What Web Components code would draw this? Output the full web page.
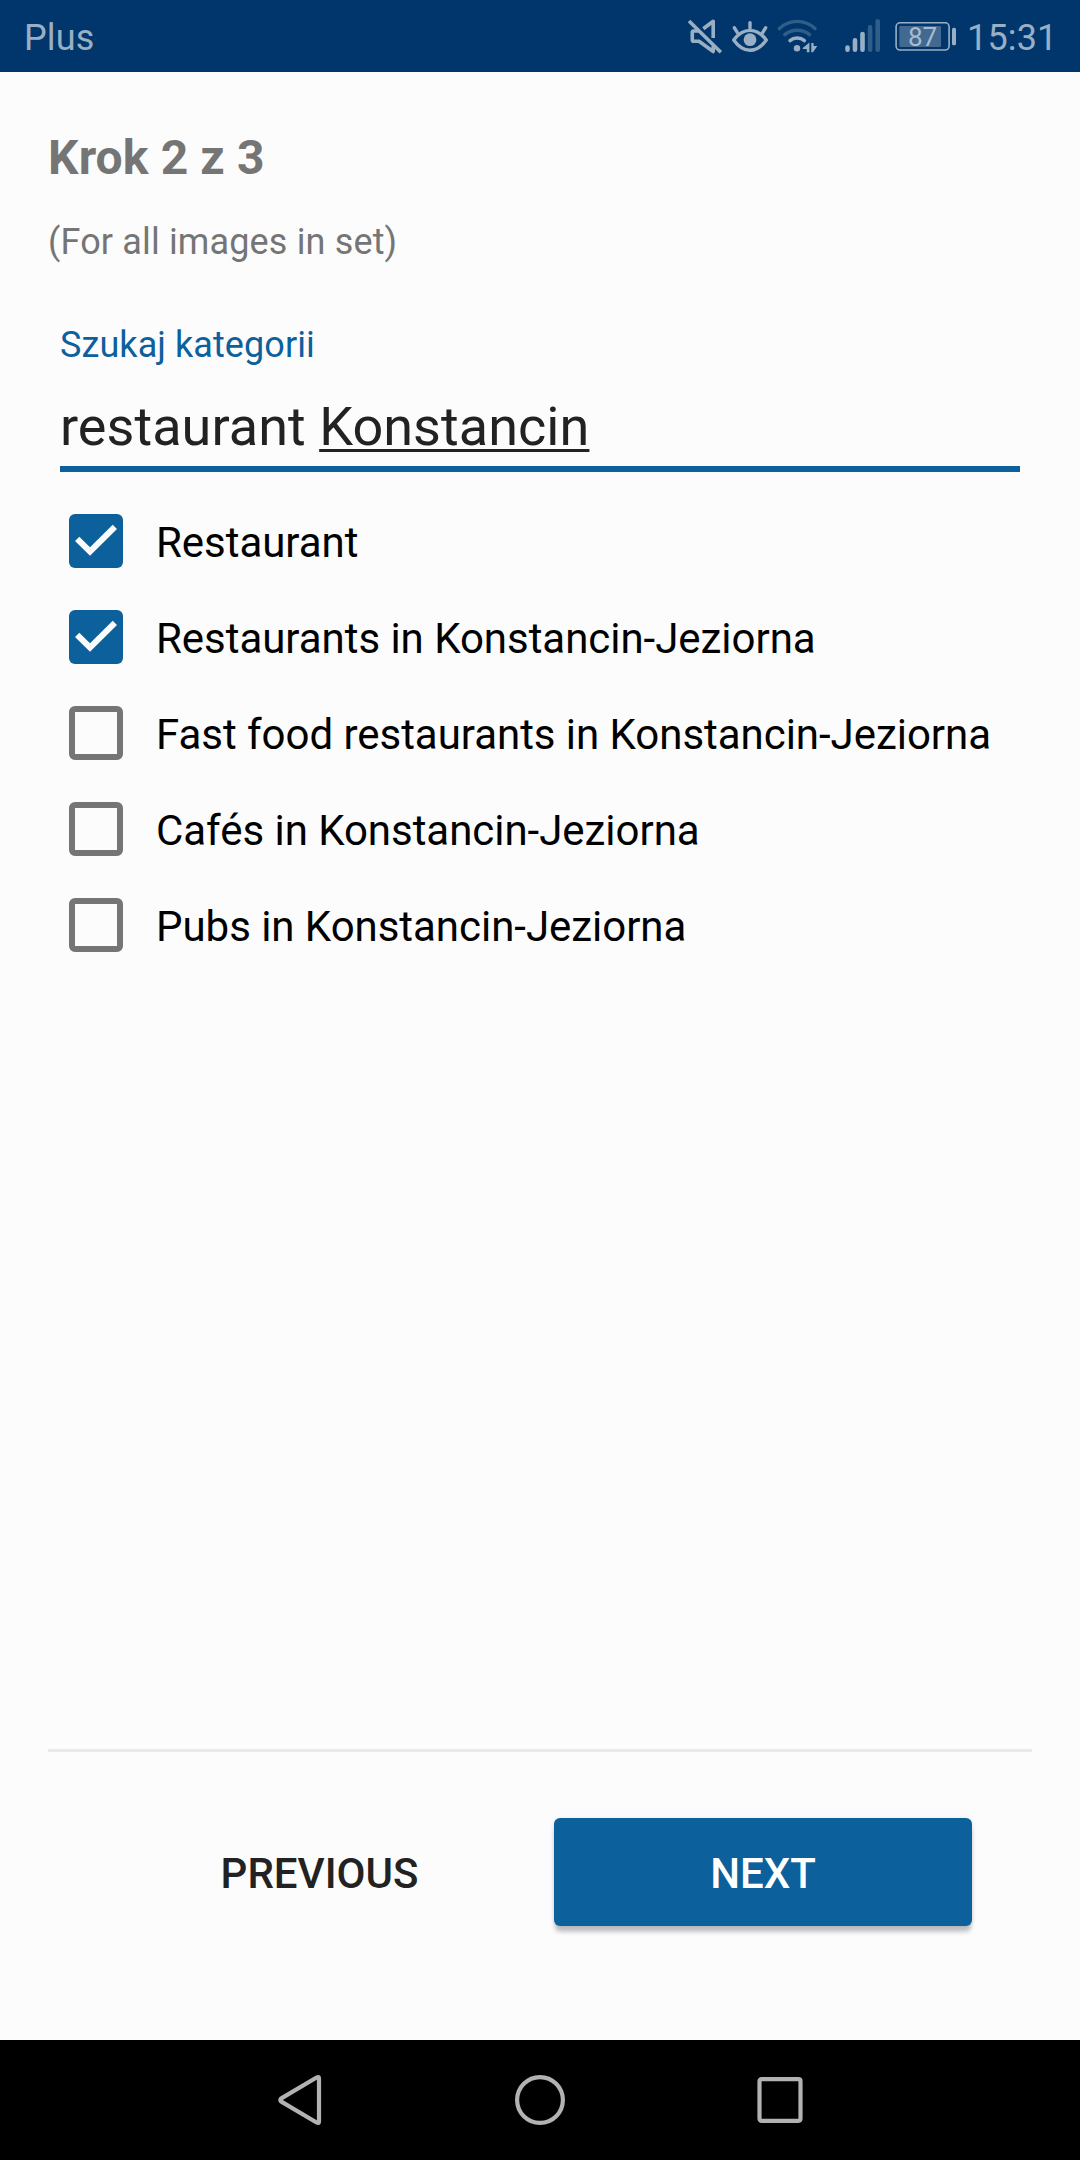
<!DOCTYPE html>
<html lang="pl">
<head>
<meta charset="utf-8">
<title>Szukaj kategorii</title>
<style>
html,body{margin:0;padding:0;background:#fcfcfc}
body{font-family:Roboto,sans-serif;width:1080px;height:2160px;overflow:hidden}
</style>
</head>
<body>
<upload-screen></upload-screen>
<script>
function define(name, html) {
  const t = document.createElement('template');
  t.innerHTML = html;
  customElements.define(name, class extends HTMLElement {
    constructor() {
      super();
      this.attachShadow({mode: 'open'}).append(t.content.cloneNode(true));
    }
  });
}

define('status-bar', `
<style>
:host{display:flex;box-sizing:border-box;height:72px;background:#00366b;color:#99afc4;font-size:36px;letter-spacing:.15px;line-height:76px;padding:0 0 0 24px;justify-content:space-between}
.right{display:flex;gap:10px;width:400px}
svg{display:block;letter-spacing:0;flex:none}
</style>
<slot></slot>
<div class="right">
<svg width="277" height="72" viewBox="680 0 277 72" fill="none" stroke="#99afc4" stroke-linecap="round" stroke-linejoin="round">
  <g stroke-width="3.6" stroke-linecap="butt">
    <path d="M703.3 28.8 713.2 21.3V38"/>
    <path d="M699 31H693.6Q692.3 31 692.3 32.3V40Q692.3 41.3 693.6 41.3H699L713.2 51.5V46"/>
    <path d="M689 21 720.8 52.2"/>
  </g>
  <g stroke-width="3.4">
    <path d="M733.7 40Q741 30.4 750 30.4T766.3 40Q759 50.3 750 50.3T733.7 40Z"/>
    <path d="M750 22.6V28M734.4 27.8 737.4 32.6M765.6 27.8 762.6 32.6"/>
    <circle cx="750" cy="39.7" r="6.4" fill="#99afc4" stroke="none"/>
  </g>
  <g stroke-width="3.4">
    <path stroke="#315e89" d="M779.4 28.6Q787 21.4 797.2 21.4T815 28.6M784.8 34.6Q790 30.2 797.2 30.2T809.6 34.6"/>
    <path d="M790 40.6Q793 38 797.2 38T804.4 40.6"/>
    <circle cx="797" cy="48.2" r="3.2" fill="#99afc4" stroke="none"/>
    <path fill="#99afc4" stroke="none" d="M802.8 48 809.4 42.6V52.2H806.8V49H802.8ZM811.3 43V52.2H813L817.3 46H813.6V43Z"/>
  </g>
  <g stroke-width="4.6">
    <path d="M847.5 47.5V49.7M855 40.4V49.7M862.5 34V49.7"/>
    <path stroke="#315e89" d="M870.1 27.4V49.7M877.7 21.3V49.7"/>
  </g>
  <rect x="896.1" y="22.8" width="53" height="27.2" rx="4" stroke-width="1.6"/>
  <rect x="899.3" y="26" width="41.7" height="21" rx="1" fill="#416991" stroke="none"/>
  <rect x="952" y="27.7" width="4" height="17.6" rx="1.6" fill="#99afc4" stroke="none"/>
  <text x="908" y="46" font-size="26" fill="#a9bccf" stroke="none">87</text>
</svg>
<slot name="time"></slot>
</div>`);

define('step-header', `
<style>
:host{display:block;color:#757575}
.t{font-size:48px;font-weight:700;line-height:56px;letter-spacing:.12px}
.s{font-size:36px;line-height:44px;margin-top:34px;letter-spacing:.15px}
</style>
<div class="t"><slot></slot></div><div class="s"><slot name="note"></slot></div>`);

define('text-field', `
<style>
:host{display:block;border-bottom:6px solid #0c609c}
.l{color:#0c609c;font-size:36px;line-height:44px;letter-spacing:.08px}
.v{color:#222;font-size:54px;line-height:64px;margin-top:28px;padding-bottom:16px;height:55px;letter-spacing:.05px}
</style>
<div class="l"><slot name="label"></slot></div><div class="v"><slot></slot></div>`);

customElements.define('category-item', class extends HTMLElement {
  connectedCallback() {
    const on = this.hasAttribute('checked');
    this.attachShadow({mode: 'open'}).innerHTML = `
<style>
:host{display:flex;height:96px;align-items:center;gap:33px;color:#000;font-size:42px;line-height:50px;letter-spacing:-.035px}
.b{box-sizing:border-box;width:54px;height:54px;border-radius:6px;border:6px solid #757575;flex:none}
:host([checked]) .b{border:0;background:#0c609c}
svg{display:block}
span{padding-top:3px}
</style>
<div class="b">${on ? '<svg width="54" height="54"><path fill="#fcfcfc" d="M6 27 10.3 22.7 21 33.3 43.7 10.7 48 15 21 41.7Z"/></svg>' : ''}</div><span><slot></slot></span>`;
  }
});

define('wizard-button', `
<style>
:host{display:flex;box-sizing:border-box;width:418px;height:108px;align-items:center;justify-content:center;font-size:42px;font-weight:500;line-height:50px;color:#222;padding:3px 0 0 5px;border-radius:6px}
:host([primary]){padding-left:0;background:#0c609c;color:#fff;box-shadow:0 7px 4px -1px rgba(0,0,0,.22),0 1px 5px rgba(0,0,0,.1)}
</style><slot></slot>`);

define('nav-bar', `
<style>
:host{display:flex;height:120px;background:#000;align-items:center;justify-content:center;gap:180px}
svg{display:block;width:60px;height:60px;fill:none;stroke:#b2b2b2;stroke-width:4.2;stroke-linejoin:round}
</style>
<svg viewBox="0 0 60 60"><path d="M10.9 28.6 47 7.3Q49 6.4 49 8.5V51.5Q49 53.6 47 52.7L10.9 31.4Q9.9 30 10.9 28.6Z"/></svg>
<svg viewBox="0 0 60 60"><circle cx="30" cy="30" r="22.9"/></svg>
<svg viewBox="0 0 60 60"><rect x="9.5" y="9.2" width="41" height="41.6" rx="2"/></svg>`);

define('upload-screen', `
<style>
:host{display:flex;flex-direction:column;height:2160px;background:#fcfcfc}
main{flex:1;display:flex;flex-direction:column;padding:58px 48px 114px}
text-field{margin:59px 12px 0}
u{text-decoration:underline;text-decoration-thickness:3px;text-underline-offset:4px;text-decoration-skip-ink:none}
.list{padding:21px 21px 0;flex:1}
hr{border:0;height:3px;background:#e9e9e9;margin:0 0 66px;width:100%}
.actions{display:flex;justify-content:flex-end;gap:28px;padding-right:60px}
</style>
<status-bar><span>Plus</span><span slot="time">15:31</span></status-bar>
<main>
  <step-header>Krok 2 z 3<span slot="note">(For all images in set)</span></step-header>
  <text-field><span slot="label">Szukaj kategorii</span><span>restaurant <u>Konstancin</u></span></text-field>
  <div class="list">
    <category-item checked>Restaurant</category-item>
    <category-item checked>Restaurants in Konstancin-Jeziorna</category-item>
    <category-item>Fast food restaurants in Konstancin-Jeziorna</category-item>
    <category-item>Cafés in Konstancin-Jeziorna</category-item>
    <category-item>Pubs in Konstancin-Jeziorna</category-item>
  </div>
  <hr>
  <div class="actions"><wizard-button>PREVIOUS</wizard-button><wizard-button primary>NEXT</wizard-button></div>
</main>
<nav-bar></nav-bar>`);
</script>
</body>
</html>
